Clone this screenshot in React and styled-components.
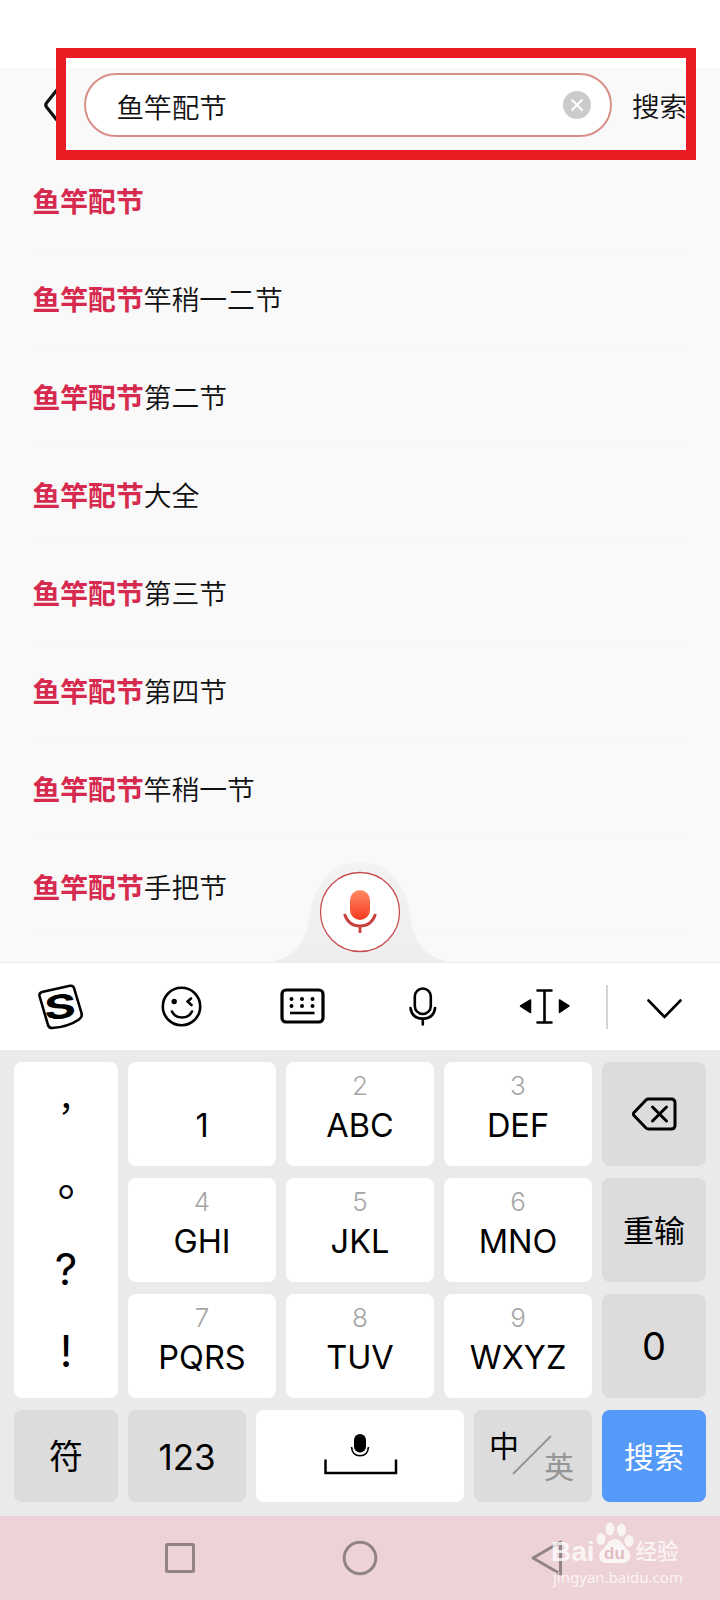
import React from "react";
import styled, { createGlobalStyle } from "styled-components";

const GlobalStyle = createGlobalStyle`
  * { box-sizing: border-box; }
  body { margin: 0; background: #f9f9f9; }
`;

const cjk = `"Noto Sans CJK SC", sans-serif`;
const latin = `Inter, "Noto Sans CJK SC", sans-serif`;

const Screen = styled.div`
  position: relative;
  width: 720px;
  height: 1600px;
  overflow: hidden;
  display: flex;
  flex-direction: column;
  background: #f9f9f9;
  font-family: ${cjk};
  color: #111;
`;

const StatusBar = styled.div`
  height: 68px;
  flex: none;
  background: #fff;
`;

const Header = styled.header`
  height: 84px;
  flex: none;
  display: flex;
  align-items: flex-start;
  padding: 5px 0 0 40px;
`;

const BackIcon = styled.svg`
  width: 24px;
  height: 64px;
  margin-right: 20px;
  fill: none;
  stroke: #111;
  stroke-width: 3.2;
  stroke-linecap: round;
  stroke-linejoin: round;
`;

const SearchField = styled.div`
  width: 528px;
  height: 64px;
  display: flex;
  align-items: center;
  justify-content: space-between;
  padding: 0 19px 0 30.5px;
  border: 2px solid #d98f88;
  border-radius: 32px;
  background: #fff;
`;

const Query = styled.span`
  height: 60px;
  font-size: 27.6px;
  line-height: 62px;
  font-weight: 350;
`;

const ClearIcon = styled.svg`
  width: 28px;
  height: 28px;
`;

const SearchLink = styled.span`
  margin-left: 20px;
  font-size: 27.6px;
  line-height: 65px;
  font-weight: 350;
`;

const Highlight = styled.div`
  position: absolute;
  left: 56px;
  top: 48px;
  width: 640px;
  height: 112px;
  border: 10px solid #eb1c24;
`;

const Suggestions = styled.ul`
  flex: 1;
  min-height: 0;
  margin: 0;
  padding: 0 33px 0 32.5px;
  list-style: none;
`;

const Suggestion = styled.li`
  height: 98px;
  border-bottom: 1px solid #f6f6f6;
  font-size: 27.8px;
  line-height: 97px;
  font-weight: 350;
  white-space: nowrap;
`;

const Match = styled.b`
  font-weight: 700;
  color: #d62a4f;
`;

const VoiceBump = styled.svg`
  position: absolute;
  left: 264px;
  top: 858px;
  width: 192px;
  height: 105px;
`;

const Toolbar = styled.div`
  height: 88px;
  flex: none;
  display: flex;
  align-items: center;
  border-top: 1px solid #ececec;
  background: #fff;
`;

const Tool = styled.div`
  width: ${(p) => p.$w || 121}px;
  display: flex;
  justify-content: center;
  svg {
    width: 61px;
    height: 61px;
    fill: none;
    stroke: #000;
    stroke-width: 2.6;
    stroke-linecap: round;
    stroke-linejoin: round;
  }
`;

const Separator = styled.div`
  width: 2px;
  height: 44px;
  margin-left: 1px;
  background: #d4d4d4;
`;

const Keyboard = styled.div`
  height: 466px;
  flex: none;
  display: flex;
  flex-direction: column;
  gap: 12px;
  padding: 12px 14px 14px;
  background: #eaeaea;
`;

const KeyGrid = styled.div`
  display: grid;
  grid-template-columns: 104px repeat(3, 148px) 104px;
  grid-template-rows: repeat(3, 104px);
  gap: 12px 10px;
`;

const BottomRow = styled.div`
  height: 92px;
  display: grid;
  grid-template-columns: 104px 118px 208px 118px 104px;
  gap: 10px;
`;

const tones = { light: "#fff", dark: "#dcdcdc", accent: "#559af9" };

const Key = styled.div`
  display: flex;
  flex-direction: column;
  align-items: center;
  justify-content: center;
  border-radius: 8px;
  background: ${(p) => tones[p.$tone || "light"]};
  color: ${(p) => (p.$tone === "accent" ? "#fff" : "#000")};
  font-family: ${latin};
  font-size: ${(p) => p.$size || 32}px;
  font-weight: 370;
  line-height: 1;
`;

const LetterKey = styled(Key)`
  justify-content: flex-start;
  padding-top: 10px;
`;

const Digit = styled.span`
  height: 28px;
  font-size: 26px;
  line-height: 28px;
  font-weight: 300;
  color: #a6a6a6;
`;

const Letters = styled.span`
  font-size: 32.5px;
  line-height: 51px;
`;

const PunctuationKey = styled(Key)`
  grid-row: span 3;
  justify-content: flex-start;
`;

const Mark = styled.span`
  height: 84px;
  line-height: ${(p) => p.$lh || 84}px;
  font-family: ${(p) => (p.$cjk ? `"Noto Sans CJK TC", sans-serif` : latin)};
  font-size: ${(p) => p.$size}px;
`;

const Label = styled.span`
  padding-top: ${(p) => p.$drop || 0}px;
`;

const LanguageKey = styled(Key)`
  flex-direction: row;
  align-items: flex-start;
  justify-content: flex-start;
  padding: 20px 0 0 15px;
  font-size: 30px;
`;

const Slash = styled.svg`
  width: 40px;
  height: 40px;
  margin: 5px -8px 0 -7px;
`;

const Other = styled.span`
  margin-top: 22px;
  color: #959595;
`;

const KeyIcon = styled.svg`
  fill: none;
  stroke: #000;
  stroke-linejoin: round;
`;

const NavBar = styled.nav`
  height: 84px;
  flex: none;
  display: flex;
  align-items: center;
  justify-content: space-between;
  padding: 0 160px;
  background: #edd3d7;
`;

const NavIcon = styled.svg`
  width: 40px;
  height: 40px;
  overflow: visible;
  fill: none;
  stroke: #928486;
  stroke-width: 3;
  stroke-linejoin: round;
`;

const Watermark = styled.div`
  position: absolute;
  left: 551px;
  top: 1520px;
  width: 140px;
  color: #fff;
  opacity: 0.75;
`;

const Brand = styled.div`
  height: 47px;
  display: flex;
  align-items: flex-end;
  font: 700 28px/31px "Liberation Sans", sans-serif;
`;

const Paw = styled.svg`
  width: 38px;
  height: 42px;
  margin: 0 2px 4px 1px;
  fill: #fff;
`;

const BrandCn = styled.span`
  font: 500 21.5px/34px ${cjk};
`;

const Url = styled.div`
  margin-left: 2px;
  font: 400 15px/20px "Noto Sans", sans-serif;
`;

const suggestions = ["", "竿稍一二节", "第二节", "大全", "第三节", "第四节", "竿稍一节", "手把节"];

const rows = [
  [["", "1"], ["2", "ABC"], ["3", "DEF"]],
  [["4", "GHI"], ["5", "JKL"], ["6", "MNO"]],
  [["7", "PQRS"], ["8", "TUV"], ["9", "WXYZ"]],
];

const sideKeys = [
  <Key $tone="dark" key="del">
    <KeyIcon width="50" height="40" viewBox="-1 0 50 40" strokeWidth="3">
      <path d="M18.500 5H41Q45 5 45 9V31Q45 35 41 35H18.500Q17 35 16 34L4 21.500Q2.800 20 4 18.500L16 6Q17 5 18.500 5Z" />
      <path d="M22.500 13L36.500 27M36.500 13L22.500 27" strokeLinecap="round" />
    </KeyIcon>
  </Key>,
  <Key $tone="dark" $size={31} key="re"><Label $drop={1}>重输</Label></Key>,
  <Key $tone="dark" $size={38} key="0"><Label>0</Label></Key>,
];

export default function App() {
  return (
    <Screen>
      <GlobalStyle />
      <StatusBar />
      <Header>
        <BackIcon viewBox="0 0 24 64">
          <path d="M20 13L6.500 30Q5 32 6.500 34L20 51" />
        </BackIcon>
        <SearchField>
          <Query>鱼竿配节</Query>
          <ClearIcon viewBox="0 0 28 28">
            <circle cx="14" cy="14" r="14" fill="#cbcbcb" />
            <path d="M8.500 8.500L19.500 19.500M19.500 8.500L8.500 19.500" stroke="#fff" strokeWidth="2" />
          </ClearIcon>
        </SearchField>
        <SearchLink>搜索</SearchLink>
      </Header>

      <Suggestions>
        {suggestions.map((tail) => (
          <Suggestion key={tail}>
            <Match>鱼竿配节</Match>
            {tail}
          </Suggestion>
        ))}
      </Suggestions>

      <Toolbar>
        <Tool>
          <svg viewBox="0 0 61 61">
            <path d="M12 16L40 9.800Q43 9.200 44 12L51.500 37Q52.500 41 49 43.500Q38 51 22 52Q19 52 18 49L9.500 20Q9 17 12 16Z" />
            <text transform="translate(30.500 42.500) rotate(-6) skewX(-4) scale(1.48 1)" textAnchor="middle" fontFamily="Inter, sans-serif" fontWeight="750" fontSize="33" fill="#000" stroke="none">S</text>
          </svg>
        </Tool>
        <Tool>
          <svg viewBox="0 0 61 61">
            <circle cx="30.500" cy="30.500" r="18.700" />
            <circle cx="23.200" cy="25.500" r="2.700" fill="#000" stroke="none" />
            <path d="M40 22.500L36.500 25.500L40.500 29M21 35.500C25 43.500 37 43.500 41 35.500" />
          </svg>
        </Tool>
        <Tool>
          <svg viewBox="0 0 61 61">
            <rect x="10" y="14" width="41" height="32" rx="4" strokeWidth="3.200" />
            <path d="M19.500 23h0M30 23h0M40.500 23h0M19.500 30h0M30 30h0M40.500 30h0" strokeWidth="4" />
            <path d="M18 37H42.500" strokeLinecap="butt" />
          </svg>
        </Tool>
        <Tool>
          <svg viewBox="0 0 61 61">
            <rect x="21.800" y="12.500" width="16" height="25.500" rx="8" />
            <path d="M17.500 32C18.500 39.500 23.500 42.600 29.800 42.600S41.100 39.500 42.100 32M29.800 43V48.500" />
          </svg>
        </Tool>
        <Tool>
          <svg viewBox="0 0 61 61">
            <path d="M23.500 14.500H37.500M23.500 46.500H37.500M30.500 14.500V46.500" />
            <path d="M6.500 30L16.500 24V36.500ZM55 30L45.500 24V36.500Z" fill="#000" strokeWidth="1.500" />
          </svg>
        </Tool>
        <Separator />
        <Tool $w={112}>
          <svg viewBox="0 0 61 61">
            <path d="M14.500 24.500L30.500 41L46.500 24.500" strokeLinejoin="miter" />
          </svg>
        </Tool>
      </Toolbar>

      <Keyboard>
        <KeyGrid>
          <PunctuationKey>
            <Mark $cjk $size={34} $lh={90}>，</Mark>
            <Mark $cjk $size={44} $lh={89}>。</Mark>
            <Mark $size={44} $lh={78}>?</Mark>
            <Mark $size={44} $lh={74}>!</Mark>
          </PunctuationKey>
          {rows.map((row, i) => (
            <React.Fragment key={i}>
              {row.map(([digit, letters]) => (
                <LetterKey key={letters}>
                  <Digit>{digit}</Digit>
                  <Letters>{letters}</Letters>
                </LetterKey>
              ))}
              {sideKeys[i]}
            </React.Fragment>
          ))}
        </KeyGrid>
        <BottomRow>
          <Key $tone="dark" $size={34}><Label $drop={2}>符</Label></Key>
          <Key $tone="dark" $size={35}><Label $drop={2}>123</Label></Key>
          <Key>
            <KeyIcon width="76" height="44" viewBox="0 0 76 44" strokeWidth="2.500">
              <path d="M3.500 25.500V39H74V25.500" strokeLinejoin="miter" />
              <rect x="32" y="0" width="12" height="18.500" rx="6" fill="#000" stroke="none" />
              <path d="M29.500 13C30 19 33.500 21.800 38 21.800S46 19 46.500 13" strokeWidth="1.600" />
            </KeyIcon>
          </Key>
          <LanguageKey $tone="dark">
            <Label $drop={1}>中</Label>
            <Slash viewBox="0 0 40 40">
              <path d="M1 39L39 1" stroke="#959595" strokeWidth="2" />
            </Slash>
            <Other>英</Other>
          </LanguageKey>
          <Key $tone="accent" $size={30}><Label $drop={2}>搜索</Label></Key>
        </BottomRow>
      </Keyboard>

      <NavBar>
        <NavIcon viewBox="0 0 40 40"><rect x="6.500" y="6.500" width="27" height="27" rx="1" /></NavIcon>
        <NavIcon viewBox="0 0 40 40"><circle cx="20" cy="20" r="15.800" /></NavIcon>
        <NavIcon viewBox="0 0 40 40"><path d="M13 20L40.500 4V36Z" /></NavIcon>
      </NavBar>

      <VoiceBump viewBox="0 0 192 105">
        <defs>
          <linearGradient id="bump" x1="0" y1="0" x2="0" y2="1">
            <stop offset="0" stopColor="#f3f3f3" />
            <stop offset="1" stopColor="#eeeef1" />
          </linearGradient>
          <linearGradient id="mic" x1="0" y1="0" x2="0" y2="1">
            <stop offset="0" stopColor="#ff8a66" />
            <stop offset="1" stopColor="#f53a1e" />
          </linearGradient>
        </defs>
        <path d="M8 104C32 98 42 84 46 58C50 26 68 4 96 4S142 26 146 58C150 84 160 98 184 104Z" fill="url(#bump)" />
        <circle cx="96" cy="54" r="39.500" fill="#fff" stroke="#c8504f" strokeWidth="1.300" />
        <rect x="86" y="32" width="20" height="30" rx="10" fill="url(#mic)" />
        <path d="M80.500 56C83 64 89 68 96 68S109 64 111.500 56M96 68V75" fill="none" stroke="#c8403c" strokeWidth="2.800" />
      </VoiceBump>

      <Watermark>
        <Brand>
          Bai
          <Paw viewBox="0 0 38 42">
            <ellipse cx="5" cy="18" rx="4.500" ry="6" />
            <ellipse cx="14" cy="8" rx="4.500" ry="6.500" />
            <ellipse cx="25.500" cy="9" rx="4.500" ry="6.500" />
            <ellipse cx="33" cy="20" rx="4.500" ry="6" />
            <path d="M19 18C26 18 27 25 32 29C37 34 33 42 27 42H10C3 42 1 34 6 29C11 25 12 18 19 18Z" />
            <text x="18.500" y="38" textAnchor="middle" fontFamily="Liberation Sans, sans-serif" fontWeight="700" fontSize="17" fill="#dfb5bb">du</text>
          </Paw>
          <BrandCn>经验</BrandCn>
        </Brand>
        <Url>jingyan.baidu.com</Url>
      </Watermark>
      <Highlight />
    </Screen>
  );
}
